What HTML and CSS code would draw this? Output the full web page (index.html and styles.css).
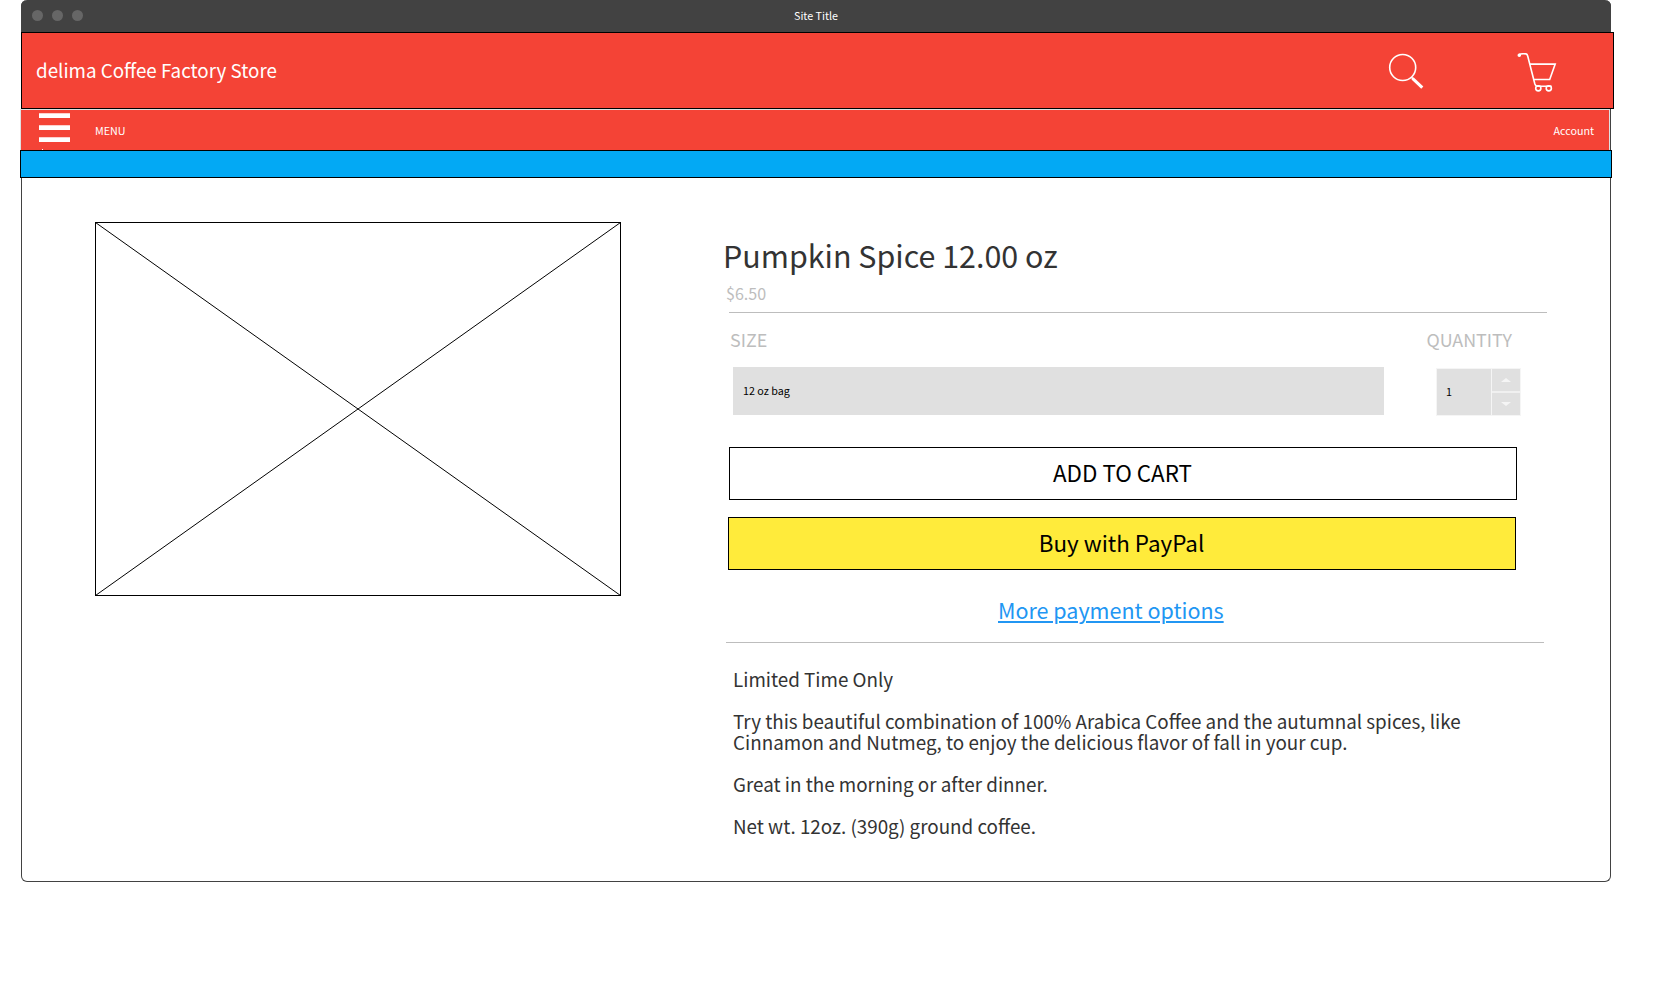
FILE: index.html
```html
<!DOCTYPE html>
<html lang="en">
<head>
<meta charset="utf-8">
<title>Site Title</title>
<link rel="stylesheet" href="styles.css">
</head>
<body>
<div class="window">
  <div class="titlebar">
    <span class="dots"><i class="dot"></i><i class="dot"></i><i class="dot"></i></span>
    <span class="site-title">Site Title</span>
  </div>
  <header class="header">
    <span class="brand">delima Coffee Factory Store</span>
    <span class="tools">
      <svg class="search" width="36" height="37" viewBox="0 0 36 37" fill="none" stroke="#fff">
        <circle cx="14.7" cy="14.500" r="13" stroke-width="1.6"/>
        <path d="M23.300 24 25 25.800" stroke-width="1.7"/>
        <path d="M24.500 25.300 34.300 34.700" stroke-width="3"/>
      </svg>
      <svg class="cart" width="40" height="40" viewBox="0 0 40 40" fill="none" stroke="#fff" stroke-width="1.6">
        <circle cx="2.3" cy="2.2" r="1" fill="#fff"/>
        <path d="M2 1.400C4 .7 7 .7 9 .9Q10.200 1.200 10.700 3L17.800 30.800Q18.600 33.300 20.500 33.300H34.500M13 11.100H38.200L32.700 26.500H17"/>
        <circle cx="21.300" cy="35.300" r="2.600"/><circle cx="31.800" cy="35.300" r="2.600"/>
      </svg>
    </span>
  </header>
  <nav class="nav">
    <svg class="burger" width="31" height="40" viewBox="0 0 31 40" fill="#fff">
      <path d="M0 3.300H31V7.900H0zM0 15.300H31V19.900H0zM0 27.300H31V31.900H0zM3 39H4V40H3z"/>
    </svg>
    <span class="menu">MENU</span>
    <span class="account">Account</span>
  </nav>
  <div class="stripe"></div>
  <main class="main">
    <svg class="photo" width="526" height="374" viewBox="0 0 526 374" fill="none" stroke="#000">
      <rect x=".5" y=".5" width="525" height="373"/>
      <path d="M.5.500 525.500 373.500M525.500.500.500 373.500"/>
    </svg>
    <section class="product">
      <h1 class="name">Pumpkin Spice 12.00 oz</h1>
      <p class="price">$6.50</p>
      <hr class="rule">
      <div class="labels"><span>SIZE</span><span>QUANTITY</span></div>
      <div class="options">
        <div class="size">12 oz bag</div>
        <div class="stepper">
          <span class="count">1</span>
          <span class="arrows">
            <span class="step"><svg width="10" height="4"><path d="M0 4 5 0 10 4z" fill="#f5f5f5"/></svg></span>
            <span class="step"><svg width="10" height="4"><path d="M0 0 5 4 10 0z" fill="#f5f5f5"/></svg></span>
          </span>
        </div>
      </div>
      <button class="button add">ADD TO CART</button>
      <button class="button paypal">Buy with PayPal</button>
      <a class="more" href="#">More payment options</a>
      <hr class="rule lower">
      <div class="description">
        <p>Limited Time Only</p>
        <p>Try this beautiful combination of 100% Arabica Coffee and the autumnal spices, like<br>Cinnamon and Nutmeg, to enjoy the delicious flavor of fall in your cup.</p>
        <p>Great in the morning or after dinner.</p>
        <p>Net wt. 12oz. (390g) ground coffee.</p>
      </div>
    </section>
  </main>
</div>
</body>
</html>
```
FILE: styles.css
```css
* { box-sizing: border-box; }
body {
  margin: 0;
  background: #fff;
  color: #333;
  font-family: "Noto Sans CJK SC", "Open Sans", sans-serif;
}
h1, p { margin: 0; font-weight: 400; }
.window {
  width: 1590px;
  height: 882px;
  margin-left: 21px;
  border: 1px solid #424242;
  border-top: 0;
  border-radius: 6px;
}
.titlebar {
  display: grid;
  grid-template-columns: 1fr auto 1fr;
  align-items: center;
  height: 32px;
  margin: 0 -1px;
  padding: 0 11px;
  background: #424242;
  border-radius: 6px 6px 0 0;
  color: #fff;
}
.dots { display: flex; gap: 9px; margin-top: -1px; }
.dot { width: 11px; height: 11px; border-radius: 50%; background: #666; }
.site-title { font-size: 10.74px; line-height: 16px; }
.header {
  display: flex;
  justify-content: space-between;
  width: 1593px;
  height: 77px;
  margin-left: -1px;
  padding-left: 14px;
  border: 1px solid #000;
  background: #f44336;
  color: #fff;
}
.brand { margin-top: 23px; font-size: 18.8px; line-height: 27px; }
.tools { display: flex; gap: 93px; padding: 20px 56px 0 0; }
.nav {
  display: flex;
  width: 1590px;
  height: 41px;
  margin-left: -2px;
  border: 1px solid #e0e0e0;
  border-bottom: 0;
  background: #f44336;
  color: #fff;
  font-size: 10.74px;
  line-height: 16px;
}
.burger { margin-left: 18px; }
.menu { margin: 13px 0 0 25px; }
.account { margin: 13px 15px 0 auto; }
.stripe {
  width: 1592px;
  height: 28px;
  margin-left: -2px;
  border: 1px solid #000;
  background: #03a9f4;
}
.main { display: flex; align-items: flex-start; padding: 44px 0 0 73px; }
.product { width: 823px; margin-left: 103px; }
.name { margin: 13px 0 0 -1px; font-size: 30.45px; line-height: 40px; }
.price { margin: 6px 0 0 2px; color: #bdbdbd; font-size: 16.1px; line-height: 24px; }
.rule { width: 818px; height: 1px; margin: 7px 0 0 5px; border: 0; background: #bdbdbd; }
.labels {
  display: flex;
  justify-content: space-between;
  width: 782px;
  margin: 13px 0 0 6px;
  color: #bdbdbd;
  font-size: 17.9px;
  line-height: 26px;
}
.options { display: flex; margin: 15px 0 0 9px; color: #000; font-size: 10.74px; }
.size {
  display: flex;
  align-items: center;
  width: 651px;
  height: 48px;
  padding: 0 0 1px 10px;
  background: #e0e0e0;
}
.stepper {
  display: flex;
  width: 85px;
  height: 48px;
  margin: 1px 0 0 52px;
  border: 1px solid #f5f5f5;
  background: #e0e0e0;
}
.count { width: 54px; padding: 15px 0 0 9px; line-height: 16px; }
.arrows { display: flex; flex: 1; flex-direction: column; border-left: 1px solid #f5f5f5; }
.step { display: flex; flex: 1; align-items: center; justify-content: center; }
.step + .step { border-top: 2px solid #f0f0f0; }
.button {
  display: block;
  width: 788px;
  height: 53px;
  padding: 0 1px 4px 0;
  border: 1px solid #000;
  background: #fff;
  color: #000;
  font-family: inherit;
  font-size: 22.4px;
  line-height: 32px;
}
.add { margin: 31px 0 0 5px; }
.paypal { margin: 17px 0 0 4px; background: #ffeb3b; }
.more {
  display: block;
  width: max-content;
  margin: 24px 0 0 274px;
  color: #2196f3;
  font-size: 21.5px;
  line-height: 32px;
  text-decoration-thickness: 2px;
  text-underline-offset: 2px;
}
.lower { margin: 16px 0 0 2px; }
.description {
  margin: 25px 0 0 9px;
  font-size: 18.82px;
  line-height: 21px;
  white-space: nowrap;
}
.description p + p { margin-top: 21px; }
```
